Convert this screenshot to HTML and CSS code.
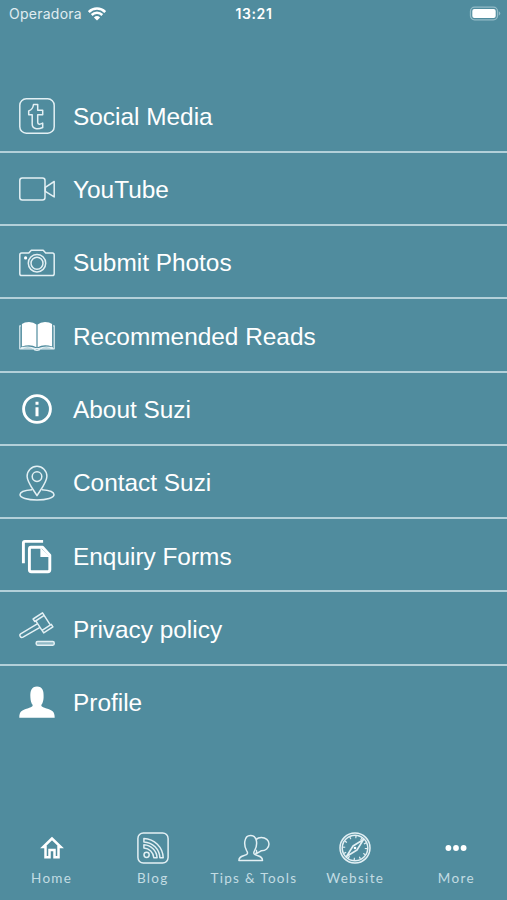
FILE: index.html
```
<!DOCTYPE html>
<html lang="en">
<head>
  <meta charset="UTF-8">
  <meta name="viewport" content="width=device-width, initial-scale=1">
  <title>More</title>
  <link rel="stylesheet" href="styles.css">
</head>

<body>
  <header class="status-bar">
    <div class="carrier">
      <span>Operadora</span>
      <svg class="wifi" viewBox="0 0 18 14">
        <path d="M.8 5a11.600 11.600 0 0 1 16.400 0M3.700 8a7.500 7.500 0 0 1 10.600 0" fill="none" stroke="#fff" stroke-width="2.500"/>
        <path d="M9 13.600 5.900 10.500a4.500 4.500 0 0 1 6.200 0z" fill="#fff"/>
      </svg>
    </div>
    <div class="time">13:21</div>
    <div class="battery">
      <svg viewBox="0 0 32 16">
        <rect x="1.500" y="1.200" width="27" height="12.600" rx="4" fill="none" stroke="#93bbc7" stroke-width="1.300"/>
        <rect x="3.300" y="3" width="23.400" height="9" rx="2" fill="#fff"/>
        <path d="M29.800 5.300q3 2.200 0 4.400z" fill="#93bbc7"/>
      </svg>
    </div>
  </header>

  <nav class="menu">
    <a class="menu-item">
      <svg class="icon" viewBox="0 0 36 36">
        <rect x=".8" y=".8" width="34.400" height="34.400" rx="6.500"/>
        <path d="M14.500 6.500h4.200v5.700h5v4.500h-5v7.500c0 2.500 2.300 2.400 5 .9v4.400c-5.200 2.400-10.500 1.600-10.500-3.500v-9.300H9.700v-3.800c3-1 4.400-3.200 4.800-6.400z"/>
      </svg>
      <span>Social Media</span>
    </a>
    <a class="menu-item">
      <svg class="icon" viewBox="0 0 36 36">
        <rect x=".8" y="7" width="25.200" height="22" rx="2.500"/>
        <path d="m26.300 16.300 8.900-5.800v15.400l-8.900-5.600z"/>
      </svg>
      <span>YouTube</span>
    </a>
    <a class="menu-item">
      <svg class="icon" viewBox="0 0 36 36">
        <path d="M2.600 8.100h7.200l2.500-2.800h11.900l2.500 2.800h6.700q1.800 0 1.800 1.800v18.800q0 1.800-1.800 1.800H2.600q-1.800 0-1.800-1.800V9.900q0-1.800 1.800-1.800z"/>
        <circle cx="18" cy="18.200" r="8.700"/>
        <circle cx="18" cy="18.200" r="6"/>
        <circle class="solid" cx="6.600" cy="12.900" r="1.600"/>
      </svg>
      <span>Submit Photos</span>
    </a>
    <a class="menu-item">
      <svg class="icon" viewBox="0 0 36 36">
        <g transform="translate(0 1.500)">
          <path class="solid" d="M2.900 4.600Q5.400 2.400 10 2.400q4.700 0 7.400 2.700v22.700q-6-3.500-14.500-.7zM18.600 5.100Q21.400 2.400 26 2.400q4.500 0 7.100 2.200v22.500q-8.300-2.800-14.500.7z"/>
          <path d="M1.900 6.300H.8v23h13.800q.7 1.500 3.400 1.500t3.400-1.500h13.800v-23h-1.100M2 28.300q9-1.700 14 .8h4q5-2.500 14-.8" stroke-width="1.200"/>
        </g>
      </svg>
      <span>Recommended Reads</span>
    </a>
    <a class="menu-item">
      <svg class="icon bold" viewBox="0 0 36 36">
        <circle cx="18" cy="18" r="13.400"/>
        <path class="solid" d="M16.500 10.700h3v3h-3zM16.500 16.300h3v9h-3z"/>
      </svg>
      <span>About Suzi</span>
    </a>
    <a class="menu-item">
      <svg class="icon" viewBox="0 0 36 36">
        <path d="M18 30.600C14.700 25 8.100 17.400 8.100 11.200a9.900 9.900 0 0 1 19.800 0C27.900 17.400 21.300 25 18 30.600z"/>
        <circle cx="18" cy="11.600" r="4.800"/>
        <path d="M13.100 24.800c-7 .5-12.100 2.300-12.100 4.900 0 3 7.300 5.200 17 5.200s17-2.200 17-5.200c0-2.600-5.100-4.400-12.100-4.900"/>
      </svg>
      <span>Contact Suzi</span>
    </a>
    <a class="menu-item">
      <svg class="icon bold" viewBox="0 0 36 36">
        <path d="M4.400 25.200V5q0-1.600 1.600-1.600h18.100"/>
        <path d="M12 9.300h11.600l7.200 8v14.500q0 1.900-1.900 1.900H12.300q-1.900 0-1.900-1.900V11.200q0-1.900 1.600-1.900z"/>
        <path class="solid" d="M21.400 9.400v9.600h9.500z"/>
      </svg>
      <span>Enquiry Forms</span>
    </a>
    <a class="menu-item">
      <svg class="icon" viewBox="0 0 36 36">
        <path d="m14.100 8 9.400-6.100 1.700 2.500-9.400 6.100zM23.100 19.400l9.200-6 1.600 2.500-9.200 6zM16.800 9.800l6 9.300M25.100 4.400l6 9.300M18.700 12.600 1.600 22.800q-1.300 1-.4 2.500 1 1.700 2.800.8L21 16.300"/>
        <rect x="17.200" y="30.600" width="18" height="3.600" rx="1.400" fill="#8fb9c6"/>
      </svg>
      <span>Privacy policy</span>
    </a>
    <a class="menu-item">
      <svg class="icon" viewBox="0 0 36 36">
        <path class="solid" d="M.3 33.700c0-6.500 2.800-7.600 8.200-9.200 4-1.300 5.200-1.700 5.200-3.400-1.600-2.300-2.100-4.700-2.300-7.700C11 6.400 12.500 2.400 18 2.400s7 4 6.600 11c-.2 3-.7 5.400-2.300 7.700 0 1.700 1.200 2.100 5.200 3.400 5.400 1.600 8.200 2.700 8.200 9.200z"/>
      </svg>
      <span>Profile</span>
    </a>
  </nav>

  <footer class="tab-bar">
    <a class="tab">
      <svg class="icon home" viewBox="0 0 32 32">
        <path d="M16 6.500 7.200 15h2.300v10.300h4V18h5v7.300h4V15h2.300z"/>
      </svg>
      <span>Home</span>
    </a>
    <a class="tab">
      <svg class="icon" viewBox="0 0 32 32">
        <rect x=".9" y=".9" width="30.200" height="30.200" rx="5.500"/>
        <circle cx="9.600" cy="22.800" r="2.600"/>
        <path d="M6.900 6.500v3.400c8.800.4 15.600 7.200 16 15.900h3.300C25.800 15.200 17.400 6.900 6.900 6.500zM6.900 12.700V16c5.400.4 9.500 4.500 9.900 9.800h3.300c-.4-7.200-6-12.700-13.200-13.100z"/>
      </svg>
      <span>Blog</span>
    </a>
    <a class="tab">
      <svg class="icon" viewBox="0 0 32 32">
        <path d="M.9 28.500c0-4.300 3.500-4 7.500-5.900 1.700-.8 1.300-2.300.2-4-2.800-4.700-3.200-15.200 4-15.200 7.300 0 7 10.400 4 15.200-1 1.700-1.300 3.200.4 4 4 1.900 7.500 1.600 7.500 5.900z"/>
        <path d="M18 7.600c1.500-1.400 3.200-2 5.300-2 4.400 0 7.700 2.600 7.700 6.500 0 4-3.500 6.900-7.900 6.700l-5.500 3.300c1.200-1.600 1.400-3 .7-4.300"/>
      </svg>
      <span>Tips &amp; Tools</span>
    </a>
    <a class="tab">
      <svg class="icon" viewBox="0 0 32 32">
        <circle cx="16" cy="16" r="15"/>
        <circle cx="16" cy="16" r="12.800"/>
        <circle cx="16" cy="16" r="11" stroke-width="2.400" stroke-dasharray="1.200 4.560"/>
        <path d="M24.500 7.500 18 18 7.500 24.500 14 14z" stroke-width="1.600"/>
        <circle class="solid" cx="16" cy="16" r="1.300"/>
      </svg>
      <span>Website</span>
    </a>
    <a class="tab">
      <svg class="icon" viewBox="0 0 32 32">
        <circle class="solid" cx="8.400" cy="16" r="2.900"/>
        <circle class="solid" cx="16" cy="16" r="2.900"/>
        <circle class="solid" cx="23.600" cy="16" r="2.900"/>
      </svg>
      <span>More</span>
    </a>
  </footer>
</body>
</html>
```

FILE: styles.css
```
* {
  box-sizing: border-box;
  margin: 0;
  padding: 0;
}

body {
  height: 900px;
  display: flex;
  flex-direction: column;
  background-color: #508c9e;
  color: #fff;
  font-family: "Liberation Sans", Arial, sans-serif;
  overflow: hidden;
}

.status-bar {
  display: grid;
  grid-template-columns: 1fr auto 1fr;
  align-items: center;
  height: 27px;
  padding: 0 6px 0 9px;
  font-family: Inter, sans-serif;
  font-size: 14px;
}

.carrier {
  display: flex;
  align-items: center;
  gap: 6px;
  color: #e0edf1;
  letter-spacing: 0.25px;
}

.wifi {
  width: 18px;
  height: 14px;
}

.time {
  margin-right: 2px;
  font-weight: 600;
  letter-spacing: 0.6px;
}

.battery {
  display: flex;
  justify-content: flex-end;
}

.battery svg {
  width: 32px;
  height: 16px;
}

.menu {
  margin-top: 52.4px;
}

.menu-item {
  display: flex;
  align-items: center;
  gap: 18px;
  height: 73.3px;
  padding: 2px 0 0 19px;
  border-bottom: 2px solid #b3d0d9;
  font-size: 24.4px;
}

.menu-item span {
  padding-top: 1.4px;
}

.menu-item:last-child {
  border-bottom-color: transparent;
}

.icon {
  flex: none;
  fill: none;
  stroke: #e3f0f4;
  stroke-width: 1.5;
  stroke-linejoin: round;
}

.icon.bold {
  stroke: #fff;
  stroke-width: 2.9;
}

.icon.home {
  stroke: #fff;
  stroke-width: 2.5;
  stroke-linejoin: miter;
}

.icon .solid {
  fill: #fff;
  stroke: none;
}

.menu .icon {
  width: 36px;
  height: 36px;
}

.tab-bar {
  display: grid;
  grid-template-columns: repeat(5, 101.2px);
  margin-top: auto;
  padding-left: 1px;
  height: 68px;
}

.tab {
  display: flex;
  flex-direction: column;
  align-items: center;
  gap: 6px;
  color: #c3dce3;
  font-family: Lato, sans-serif;
  font-size: 13.5px;
  font-weight: 400;
  line-height: 17px;
  letter-spacing: 1.3px;
  white-space: nowrap;
}

.tab .icon {
  width: 32px;
  height: 32px;
}
```
